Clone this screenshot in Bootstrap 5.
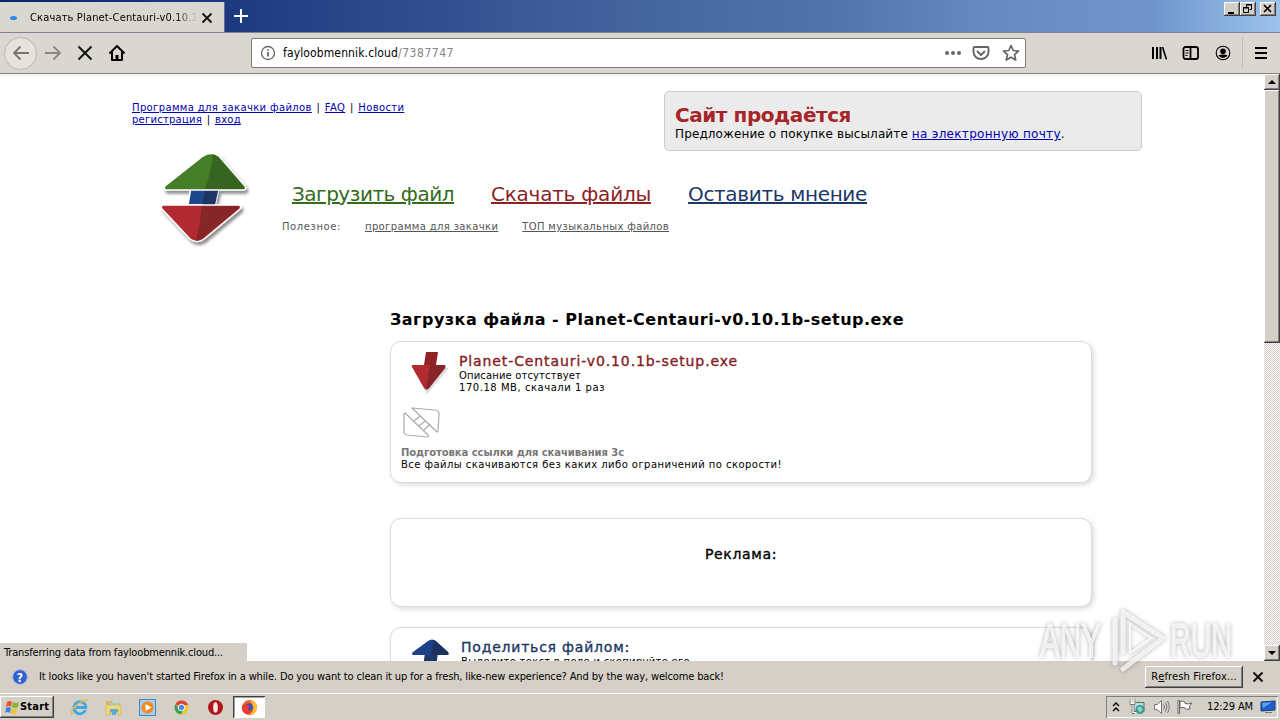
<!DOCTYPE html>
<html lang="ru">
<head>
  <meta charset="utf-8">
  <meta name="viewport" content="width=device-width, initial-scale=1">
  <title>Скачать Planet-Centauri-v0.10.1b-setup.exe</title>
  <link href="https://cdn.jsdelivr.net/npm/bootstrap@5.3.2/dist/css/bootstrap.min.css" rel="stylesheet">
  <style>
    body {
      width: 1280px; height: 720px;
      font-family: "DejaVu Sans", Verdana, sans-serif;
      font-size: 10px; line-height: 12px; color: #000;
      background: #d4d0c8;
    }
    svg { display: block; flex: none; }
    .ui-font { font-family: "DejaVu Sans Condensed", "DejaVu Sans", Tahoma, sans-serif; font-stretch: condensed; font-size: 11px; line-height: 14px; white-space: pre; }

    /* browser window */
    .titlebar { height: 33px; border-bottom: 1px solid #80848c; background: linear-gradient(90deg, #0a246a 0, #1d3a80 18%, #304e8f 33%, #45659f 50%, #5474ae 66%, #6588c0 76%, #7095cc 90%, #9cc3ec 100%); }
    .tab-item { width: 225px; height: 31px; margin-top: 2px; background: #dad6d0; border-right: 1px solid #5d6c92; padding-left: 10px; }
    .tab-dot { width: 7px; height: 4px; border-radius: 50%; background: #2a8be6; margin-right: 13px; }
    .tab-title { width: 167px; letter-spacing: .158px; -webkit-mask-image: linear-gradient(90deg, #000 145px, transparent 167px); mask-image: linear-gradient(90deg, #000 145px, transparent 167px); }
    .win-btn { background: #d4d0c8; box-shadow: inset -1px -1px #404040, inset 1px 1px #fff, inset -2px -2px #808080; }
    .win-controls { padding: 2px 4px 0 0; }
    .win-caption { width: 16px; height: 14px; }
    .toolbar-row { height: 41px; background: #dad6d0; border-bottom: 1px solid #808080; }
    .back-btn { width: 33px; height: 33px; border: 1px solid #b9b6b0; border-radius: 50%; background: #e6e3de; }
    .nav-forward { margin: 0 15px 0 7px; }
    .nav-home { margin-left: 15px; }
    .url-field { width: 775px; height: 30px; border: 1px solid #7b7b78; border-radius: 2px; background: #fff; }
    .url-text { font-size: 12px; line-height: 16px; margin-left: 7px; }
    .url-host { letter-spacing: .124px; }
    .url-path { letter-spacing: .535px; color: #858585; }
    .url-star { margin: 0 5px 0 2px; }
    .tool-icons { gap: 15px; margin: 0 12px 0 125px; }
    .tool-sep { width: 1px; height: 32px; margin: 0 -4px; background: #c2beb7; }

    /* page */
    .viewport-row { height: 587px; background: #fff; }
    .page-body { background: linear-gradient(#f4f4f4, #fff 5px); }
    .page-body a { color: #0000b4; }
    .page-top { padding: 17px 0 0 132px; }
    .top-links { width: 532px; padding-top: 11px; letter-spacing: .37px; }
    .top-links .user-links { letter-spacing: .24px; }
    .pipe { width: 13px; text-align: center; }
    .sale-box { width: 478px; height: 60px; border: 1px solid #ccc; border-radius: 5px; background: #ebebeb; padding: 11px 10px; }
    .sale-title { font-size: 20px; line-height: 24px; letter-spacing: -.438px; color: #a62529; }
    .sale-text { font-size: 12px; line-height: 14px; letter-spacing: .12px; }
    .sale-text a { letter-spacing: .303px; }
    .page-nav { height: 159px; padding-left: 132px; }
    .logo-cell { width: 150px; padding-left: 24px; }
    .main-nav { font-size: 20px; line-height: 24px; padding: 31px 0 0 10px; gap: 37px; }
    .page-body .nav-green { color: #336b1a; letter-spacing: -.478px; }
    .page-body .nav-red { color: #8c2226; letter-spacing: -.239px; }
    .page-body .nav-blue { color: #1b3866; letter-spacing: -.339px; }
    .sub-nav { padding-top: 15px; gap: 24px; color: #555; letter-spacing: .36px; }
    .sub-nav > span { letter-spacing: .59px; }
    .page-body .sub-nav a { color: #555; }
    .files-col { width: 702px; margin-left: 390px; }
    .files-head { font-size: 16px; line-height: 20px; letter-spacing: .477px; margin-bottom: 11px; }
    .panel-box { border: 1px solid #dcdcdc; border-radius: 11px; box-shadow: 2px 2px 5px rgba(0, 0, 0, .14); background: #fff; padding: 10px; }
    .panel-file { height: 142px; margin-bottom: 35px; }
    .panel-ad { height: 89px; margin-bottom: 20px; padding-top: 26px; }
    .panel-share { height: 120px; }
    .panel-title { font-size: 14px; line-height: 18px; letter-spacing: .637px; -webkit-text-stroke: .35px; }
    .t-red { color: #842025; letter-spacing: .892px; }
    .t-blue { color: #1d3763; letter-spacing: .786px; }
    .file-info { height: 55px; }
    .spin-icon { margin-bottom: 6px; }
    .desc-line { letter-spacing: .14px; }
    .size-line { letter-spacing: .536px; }
    .wait-line { color: #777; letter-spacing: -.067px; }
    .speed-line { letter-spacing: .446px; }
    .share-line { letter-spacing: .299px; }

    .scroll-track { width: 16px; background: repeating-conic-gradient(#fff 0 25%, #d4d0c8 0 50%) 0 0 / 2px 2px; }
    .scroll-btn { height: 16px; }
    .scroll-thumb { height: 253px; }

    .status-tip { left: 0; bottom: 0; width: 247px; height: 18px; background: #d4d0c8; padding: 3px 0 0 4px; letter-spacing: -.16px; }
    .watermark { left: 1031px; top: 601px; filter: drop-shadow(0 0 2px rgba(0, 0, 0, .4)); pointer-events: none; }

    /* notification and taskbar */
    .notify-row { height: 32px; background: #d5cfc7; }
    .notify-icon { margin: 0 11px 0 12px; }
    .notify-text { letter-spacing: -.139px; }
    .notify-close { margin: 0 16px 0 9px; }
    .refresh-btn { width: 98px; height: 22px; letter-spacing: .14px; }
    .taskbar { height: 27px; border-top: 1px solid #fff; background: #d4d0c8; }
    .start-btn { width: 54px; height: 22px; padding-left: 4px; margin-right: 17px; letter-spacing: .2px; }
    .quick-icons { gap: 17px; margin-right: 9px; }
    .task-active { width: 32px; height: 22px; background: #fff; box-shadow: inset 1px 1px #404040, inset -1px -1px #fff, inset 2px 2px #a0a0a0; }
    .tray { width: 172px; height: 22px; margin-right: 2px; padding: 0 2px 0 6px; box-shadow: inset 1px 1px #808080, inset -1px -1px #fff; }
    .tray-icons { gap: 7px; margin: 0 13px 0 9px; }
    .tray-time { letter-spacing: -.121px; }
  </style>
</head>
<body class="overflow-hidden position-relative d-flex flex-column">

  <header class="titlebar d-flex flex-shrink-0 overflow-hidden">
    <div class="tab-item d-flex align-items-center">
      <div class="tab-dot"></div>
      <div class="tab-title ui-font overflow-hidden">Скачать Planet-Centauri-v0.10.1b</div>
      <svg class="ms-1" width="12" height="12" stroke="#111" stroke-width="1.8"><path d="M1.500 1.500l9 9M10.500 1.500l-9 9"/></svg>
    </div>
    <svg class="ms-2 mt-2" width="16" height="16" stroke="#fff" stroke-width="2"><path d="M8 1v14M1 8h14"/></svg>
    <div class="win-controls d-flex ms-auto">
      <div class="win-btn win-caption"><svg width="16" height="14"><path d="M4 10h6v2H4z"/></svg></div>
      <div class="win-btn win-caption me-1"><svg width="16" height="14" fill="none" stroke="#000"><path d="M6.500 5V2.500h5v5H9.500M6 3h6M3.500 5.500h5v5h-5zM3 6h6"/></svg></div>
      <div class="win-btn win-caption"><svg width="16" height="14" stroke="#000" stroke-width="1.700"><path d="M4 3l7 7M11 3l-7 7"/></svg></div>
    </div>
  </header>

  <nav class="toolbar-row d-flex align-items-center flex-shrink-0">
    <div class="back-btn d-flex align-items-center justify-content-center ms-1">
      <svg width="18" height="16" fill="none" stroke="#77746f" stroke-width="1.800"><path d="M17 8H2M8.500 1.500L2 8l6.500 6.500"/></svg>
    </div>
    <svg class="nav-forward" width="18" height="16" fill="none" stroke="#8a8781" stroke-width="1.800"><path d="M1 8h15M9.500 1.500L16 8l-6.500 6.500"/></svg>
    <svg width="16" height="16" stroke="#111" stroke-width="2"><path d="M1.500 1.500l13 13M14.500 1.500l-13 13"/></svg>
    <svg class="nav-home" width="18" height="18" fill="none" stroke="#000" stroke-width="2"><path d="M1.500 9.500L9 2l7.500 7.500M4 8v8h10V8" stroke-linejoin="round"/><path d="M9 16v-5" stroke-width="3"/></svg>
    <div class="url-field d-flex align-items-center ms-auto">
      <svg class="ms-2" width="16" height="16" fill="none" stroke="#686868" stroke-width="1.300"><circle cx="8" cy="8" r="6.500"/><path d="M8 7v4.500M8 4.200v1.600" stroke-width="1.800"/></svg>
      <div class="url-text ui-font"><span class="url-host">fayloobmennik.cloud</span><span class="url-path">/7387747</span></div>
      <svg class="ms-auto" width="18" height="6" fill="#666"><circle cx="3" cy="3" r="2"/><circle cx="9" cy="3" r="2"/><circle cx="15" cy="3" r="2"/></svg>
      <svg class="mx-2" width="22" height="16" fill="none" stroke="#666" stroke-width="1.900" stroke-linecap="round" stroke-linejoin="round"><path d="M4.500 2h13q1 0 1 1v4a7.500 7 0 0 1-15 0V3q0-1 1-1z"/><path d="M7.500 6.500l3.500 3.500 3.500-3.500"/></svg>
      <svg class="url-star" width="18" height="18" fill="none" stroke="#666" stroke-width="1.700" stroke-linejoin="round"><path d="M9 1.500l2.200 5 5.300.5-4 3.600 1.200 5.400L9 13.200 4.300 16l1.200-5.400-4-3.600 5.300-.5z"/></svg>
    </div>
    <div class="tool-icons d-flex align-items-center">
      <svg width="16" height="16" stroke="#000" stroke-width="2"><path d="M2 2v12M6 2v12M9.500 2v12"/><path d="M11.500 2l4 12.500" stroke-width="1.600"/></svg>
      <svg width="18" height="16" fill="none" stroke="#000" stroke-width="1.800"><rect x="1.500" y="2" width="14.500" height="12" rx="2"/><path d="M8.500 2v12"/><path d="M3.500 5.500h3M3.500 8h3M3.500 10.500h2" stroke-width="1"/></svg>
      <svg width="16" height="16"><circle cx="8" cy="8" r="6.800" fill="none" stroke="#000" stroke-width="1.100"/><circle cx="8" cy="6.300" r="2.800"/><path d="M3.500 10.300q4.500-1.800 9 0a5 5 0 0 1-9 0z"/></svg>
      <div class="tool-sep"></div>
      <svg width="14" height="14" stroke="#000" stroke-width="2"><path d="M1 2h12M1 7h12M1 12h12"/></svg>
    </div>
  </nav>

  <div class="viewport-row d-flex flex-shrink-0 position-relative overflow-hidden">
    <main class="page-body flex-grow-1 overflow-hidden">
      <div class="page-top d-flex">
        <div class="top-links">
          <div class="d-flex"><a href="#">Программа для закачки файлов</a><span class="pipe">|</span><a href="#">FAQ</a><span class="pipe">|</span><a href="#">Новости</a></div>
          <div class="user-links d-flex"><a href="#">регистрация</a><span class="pipe">|</span><a href="#">вход</a></div>
        </div>
        <div class="sale-box">
          <div class="sale-title fw-bold">Сайт продаётся</div>
          <div class="sale-text">Предложение о покупке высылайте <a href="#">на электронную почту</a>.</div>
        </div>
      </div>

      <div class="page-nav d-flex">
        <div class="logo-cell">
          <svg width="94" height="96" viewBox="0 0 94 96">
            <defs><filter id="soft" x="-10%" y="-10%" width="130%" height="130%"><feDropShadow dx="2" dy="3" stdDeviation="1.500" flood-opacity=".45"/></filter></defs>
            <g filter="url(#soft)" stroke="#fff" stroke-width="1.500">
              <path d="M35 36h28l-4 18H32z" fill="#1d4a8c"/>
              <path d="M50 36h13l-4 18H46z" fill="#1c3564" stroke="none"/>
              <path d="M10 39Q7 38 9 35L47 5Q55 0 63 5L89 35Q91 39 87 39z" fill="#447e25"/>
              <path d="M7 54h76q3 1 1 4L48 88Q41 93 34 88L6 58Q4 55 7 54z" fill="#b12c30"/>
            </g>
            <path d="M57 3l5 3 26 30q1 2-1 2H49q6-16 8-35z" fill="#356521"/>
            <path d="M46 55h36q2 1 0 3L47 87q-4 3-7 3 4-17 6-35z" fill="#872629"/>
          </svg>
        </div>
        <div>
          <div class="main-nav d-flex">
            <a class="nav-green" href="#">Загрузить файл</a>
            <a class="nav-red" href="#">Скачать файлы</a>
            <a class="nav-blue" href="#">Оставить мнение</a>
          </div>
          <div class="sub-nav d-flex">
            <span>Полезное:</span>
            <a href="#">программа для закачки</a>
            <a href="#">ТОП музыкальных файлов</a>
          </div>
        </div>
      </div>

      <div class="files-col">
        <div class="files-head fw-bold text-nowrap">Загрузка файла - Planet-Centauri-v0.10.1b-setup.exe</div>

        <section class="panel-box panel-file">
          <div class="file-info d-flex">
            <svg width="58" height="44" viewBox="0 0 58 44">
              <path d="M12 15h35L25 41z" fill="#999" opacity=".35" transform="translate(1 1)"/>
              <path d="M25 0h12l-2 13H23z" fill="#922226"/>
              <path d="M12 13q-2 0-1 2l12 21q2 3 5 0l16-20q1-3-1-3z" fill="#b22b30"/>
              <path d="M29 13h14q2 0 1 3L28 36q-2 2-3 1z" fill="#86262a"/>
            </svg>
            <div>
              <div class="panel-title t-red">Planet-Centauri-v0.10.1b-setup.exe</div>
              <div class="desc-line">Описание отсутствует</div>
              <div class="size-line">170.18 MB, скачали 1 раз</div>
            </div>
          </div>
          <svg class="spin-icon" width="40" height="34" viewBox="0 0 40 34" fill="none" stroke="#aaa" stroke-width="1.200" stroke-linejoin="round">
            <path d="M11 1l23 2q4 1 4 4l-1 17q0 2-2 0z"/><path d="M4 6l23 22q2 2-1 2L6 28q-4-1-3-5V8q0-2 1-2z"/><path d="M13 14l6-5M18 19l6-5M23 23l5-5"/>
          </svg>
          <div class="wait-line fw-bold">Подготовка ссылки для скачивания 3с</div>
          <div class="speed-line">Все файлы скачиваются без каких либо ограничений по скорости!</div>
        </section>

        <section class="panel-box panel-ad text-center">
          <div class="panel-title">Реклама:</div>
        </section>

        <section class="panel-box panel-share d-flex">
          <svg width="60" height="44" viewBox="0 0 60 44">
            <path d="M24 14h13l-2 16H22z" fill="#1d3869"/>
            <path d="M12 17q-2-1 0-3L27 3q4-3 8 0l12 11q2 3-1 3z" fill="#1d4187"/>
            <path d="M33 2l14 12q1 3-1 3H30z" fill="#1c325e"/>
          </svg>
          <div>
            <div class="panel-title t-blue">Поделиться файлом:</div>
            <div class="share-line">Выделите текст в поле и скопируйте его</div>
          </div>
        </section>
      </div>
    </main>

    <aside class="scroll-track d-flex flex-column">
      <div class="win-btn scroll-btn"><svg width="16" height="16"><path d="M8 6l4 4H4z"/></svg></div>
      <div class="win-btn scroll-thumb"></div>
      <div class="win-btn scroll-btn mt-auto"><svg width="16" height="16"><path d="M4 6h8l-4 4z"/></svg></div>
    </aside>

    <div class="status-tip ui-font position-absolute">Transferring data from fayloobmennik.cloud...</div>
  </div>

  <div class="notify-row d-flex align-items-center flex-shrink-0 ui-font">
    <svg class="notify-icon" width="16" height="16"><circle cx="8" cy="8" r="7.300" fill="#2f62cf" stroke="#9fb4dc"/><text x="8" y="12.500" text-anchor="middle" font-size="12" font-weight="700" fill="#fff">?</text></svg>
    <div class="notify-text">It looks like you haven't started Firefox in a while. Do you want to clean it up for a fresh, like-new experience? And by the way, welcome back!</div>
    <div class="win-btn refresh-btn d-flex align-items-center justify-content-center ms-auto">R<u>e</u>fresh Firefox...</div>
    <svg class="notify-close" width="12" height="12" stroke="#111" stroke-width="2"><path d="M1.500 1.500l9 9M10.500 1.500l-9 9"/></svg>
  </div>

  <footer class="taskbar d-flex align-items-center flex-shrink-0 ui-font">
    <div class="win-btn start-btn d-flex align-items-center fw-bold">
      <svg width="16" height="16" viewBox="0 0 16 16"><path d="M3 3q3-2 5 0L7 8q-2-2-5 0z" fill="#e8562a"/><path d="M9 3q3 2 6 0l-1 5q-3 2-6 0z" fill="#7fb93c"/><path d="M2 9q2-2 5 0l-1 5q-3-2-5 0z" fill="#3f86d8"/><path d="M8 9q3 2 6 0l-2 5q-2 2-5 0z" fill="#f5c032"/></svg>
      <span>Start</span>
    </div>
    <div class="quick-icons d-flex align-items-center">
      <svg width="17" height="17" viewBox="0 0 17 17" fill="none"><path d="M14.500 11a6 6 0 1 1 .3-3.500v1H5" stroke="#3fa9e6" stroke-width="2.800"/><path d="M1 15.500Q-1 11 7 5t9.500-3" stroke="#e9bd3a" stroke-width="1.500"/></svg>
      <svg width="17" height="17" viewBox="0 0 17 17"><path d="M1 2h6l1 2h7v10H1z" fill="#dfb94f"/><path d="M4 4h10v4H4z" fill="#8fd0ea"/><path d="M1 6h15v10h-3v-5H5v5H1z" fill="#f2d876" stroke="#cfae4d" stroke-width=".6"/><path d="M5 10h8v3h-2v3H7v-3H5z" fill="#5ba9d6"/></svg>
      <svg width="17" height="17" viewBox="0 0 17 17"><rect x=".5" y=".5" width="16" height="16" fill="#a8cdea" stroke="#4b86bd"/><circle cx="8.500" cy="8.500" r="6" fill="#f08a1d"/><path d="M6.500 5l6 3.500-6 3.500z" fill="#fff"/></svg>
      <svg width="17" height="17" viewBox="0 0 17 17"><circle cx="8.500" cy="8.500" r="7" fill="#f6c52d"/><path d="M2.500 5a7 7 0 0 1 12.500 1H8.500v4z" fill="#dc4437"/><path d="M2.500 5a7 7 0 0 0 5.500 10.500l2.500-5H6z" fill="#2fa356"/><circle cx="8.500" cy="8.500" r="3.200" fill="#4286e8" stroke="#fff"/></svg>
      <svg width="17" height="17" viewBox="0 0 17 17"><circle cx="8.500" cy="8.500" r="7.500" fill="#b3141a"/><ellipse cx="8.500" cy="8.500" rx="2.300" ry="5.200" fill="#f4ecec"/></svg>
    </div>
    <div class="task-active d-flex align-items-center justify-content-center">
      <svg width="17" height="17" viewBox="0 0 17 17"><circle cx="8.500" cy="8.500" r="7.500" fill="#f0612b"/><path d="M9 1q7 2 7 8a7 7 0 0 1-9 6q7-3 5-8-1-3-3-6z" fill="#fbc02a"/><circle cx="8" cy="8" r="3.800" fill="#3b4fb8"/><path d="M1 7q3-3 5-1l3 1-2 3q1 3 5 1-2 5-7 4-5-2-4-8z" fill="#ec3d35"/></svg>
    </div>
    <div class="tray d-flex align-items-center ms-auto">
      <svg width="8" height="12" fill="none" stroke="#000" stroke-width="1.400"><path d="M1 5l3-3 3 3M1 10l3-3 3 3"/></svg>
      <div class="tray-icons d-flex align-items-center">
        <svg width="17" height="16"><path d="M5 3.500h10v9H5z" fill="#b9dfe2" stroke="#5d6b6d"/><circle cx="11" cy="10.500" r="4.500" fill="#3a9b8f"/><path d="M8 9q3-3 5 0t-3 4z" fill="#8fd3c8"/><path d="M1.500 1v4h4V1M3.500 5v9h3" fill="none" stroke="#fff" stroke-width="2"/><path d="M1 .500v5h5v-5M3 6v8.500h3" fill="none" stroke="#555" stroke-width=".8"/></svg>
        <svg width="17" height="16" fill="none" stroke="#777"><path d="M1.500 5.500h3l4-4v13l-4-4h-3z" fill="#fff"/><path d="M10.500 5.500q2 2.500 0 5M12.500 3.500q3 4.500 0 9M14.500 2q3.500 6 0 12"/></svg>
        <svg width="17" height="16" fill="#fff" stroke="#666"><path d="M1 1.500h1.500v13H1zM3 2.500q3-1 5 .5v1.500q3 1 7-.5l-2.500 3 .5 3q-4 1-5-1-3-1.500-5 0z"/></svg>
      </div>
      <span class="tray-time">12:29 AM</span>
      <svg class="ms-auto" width="16" height="14"><path d="M1 2l14-1v9l-14 1z" fill="#1d5fc9" stroke="#173f82"/><path d="M2 3l10-1-9 6z" fill="#5ea2ef"/><path d="M5 12h7v1H5z" fill="#777"/></svg>
    </div>
  </footer>

  <svg class="watermark position-absolute" width="210" height="76" viewBox="0 0 210 76" fill="#fff" font-family="Liberation Sans, sans-serif" font-size="48">
    <g opacity=".75" stroke="#fff">
      <text x="9" y="56" textLength="61" lengthAdjust="spacingAndGlyphs" stroke-width="1.500">ANY</text>
      <text x="139" y="56" textLength="62" lengthAdjust="spacingAndGlyphs" stroke-width="1.500">RUN</text>
      <path d="M84 62V19M92 11v40M92 11l40 26-40 31" fill="none" stroke-width="5" stroke-linejoin="round" stroke-linecap="round"/>
      <path d="M99 23l21 14-21 15z" fill="none" stroke-width="2"/>
    </g>
  </svg>

  <script src="https://cdn.jsdelivr.net/npm/bootstrap@5.3.2/dist/js/bootstrap.bundle.min.js"></script>
</body>
</html>
